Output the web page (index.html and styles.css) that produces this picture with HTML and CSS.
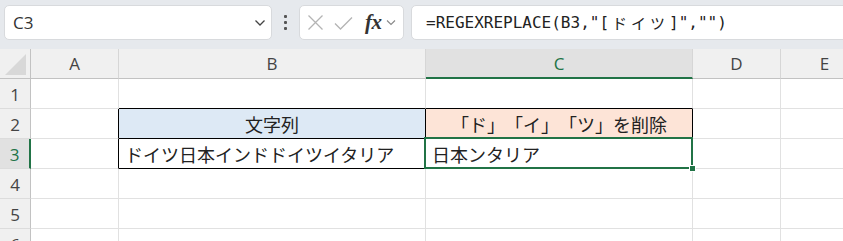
FILE: index.html
```html
<!DOCTYPE html>
<html lang="ja">
<head>
<meta charset="utf-8">
<link rel="stylesheet" href="styles.css">
</head>
<body>
<div class="toolbar">
  <div class="box namebox">
    <span class="name">C3</span>
    <svg class="chev" width="12" height="8" viewBox="0 0 12 8"><path d="M1.5 1.5 L6 6 L10.5 1.5" fill="none" stroke="#444" stroke-width="1.3"/></svg>
  </div>
  <div class="dots"><span></span><span></span><span></span></div>
  <div class="box fxbox">
    <svg class="ic-x" width="17" height="17" viewBox="0 0 17 17"><path d="M1.5 1.5 L15.5 15.5 M15.5 1.5 L1.5 15.5" stroke="#b4b4b4" stroke-width="1.3" fill="none"/></svg>
    <svg class="ic-ok" width="19" height="16" viewBox="0 0 19 16"><path d="M1 8.5 L6.5 14 L18 2.5" stroke="#b4b4b4" stroke-width="1.3" fill="none"/></svg>
    <span class="fx">fx</span>
    <svg width="10" height="7" viewBox="0 0 10 7"><path d="M1 1.5 L5 5.5 L9 1.5" fill="none" stroke="#888" stroke-width="1.1"/></svg>
  </div>
  <div class="box formula">=REGEXREPLACE(B3,"[<span class="kana">ドイツ</span>]","")</div>
</div>
<div class="sheet">
  <div class="hd corner"><span class="tri"></span></div>
  <div class="hd col">A</div>
  <div class="hd col">B</div>
  <div class="hd col sel">C</div>
  <div class="hd col">D</div>
  <div class="hd col">E</div>

  <div class="hd row">1</div>
  <div class="c"></div>
  <div class="c bb"></div>
  <div class="c bb"></div>
  <div class="c"></div>
  <div class="c"></div>

  <div class="hd row">2</div>
  <div class="c br"></div>
  <div class="c box2 blue center">文字列</div>
  <div class="c box2 orange center">「ド」「イ」「ツ」を削除</div>
  <div class="c"></div>
  <div class="c"></div>

  <div class="hd row selrow">3</div>
  <div class="c br"></div>
  <div class="c box2">ドイツ日本インドドイツイタリア</div>
  <div class="c box2 active">日本ンタリア<span class="handle"></span></div>
  <div class="c"></div>
  <div class="c"></div>

  <div class="hd row">4</div>
  <div class="c"></div><div class="c"></div><div class="c"></div><div class="c"></div><div class="c"></div>

  <div class="hd row">5</div>
  <div class="c"></div><div class="c"></div><div class="c"></div><div class="c"></div><div class="c"></div>

  <div class="hd row">6</div>
  <div class="c"></div><div class="c"></div><div class="c"></div><div class="c"></div><div class="c"></div>
</div>
</body>
</html>
```
FILE: styles.css
```css
* { box-sizing: border-box; }
html, body { margin: 0; padding: 0; }
body {
  width: 843px;
  height: 241px;
  overflow: hidden;
  background: #fff;
  font-family: "Noto Sans CJK JP", "Noto Sans", sans-serif;
  color: #222;
  text-spacing-trim: space-all;
}
.toolbar {
  height: 49px;
  background: #e6e9ed;
  display: flex;
  align-items: flex-start;
  padding: 5px 0 0 4px;
}
.box {
  height: 35px;
  background: #fff;
  border: 1px solid #d8dadd;
  border-radius: 5px;
  display: flex;
  align-items: center;
}
.namebox {
  width: 268px;
  padding: 0 0 0 8px;
  justify-content: space-between;
}
.name {
  font-family: "Open Sans", "Liberation Sans", sans-serif;
  font-size: 17px;
  color: #333;
}
.chev { margin-right: 5px; }
.dots {
  width: 27px;
  height: 35px;
  display: flex;
  flex-direction: column;
  align-items: center;
  justify-content: center;
  gap: 3px;
}
.dots span {
  width: 3px;
  height: 3px;
  background: #555;
  border-radius: 1px;
}
.fxbox {
  width: 105px;
  padding-left: 7px;
}
.ic-x { margin-right: 10px; }
.ic-ok { margin-right: 12px; }
.fx {
  font-family: "Liberation Serif", serif;
  font-style: italic;
  font-weight: bold;
  font-size: 21px;
  color: #333;
  margin-right: 4px;
  letter-spacing: -0.5px;
}
.formula {
  flex: 1;
  margin-left: 7px;
  margin-right: -20px;
  padding-left: 14px;
  font-family: "DejaVu Sans Mono", monospace;
  font-size: 16px;
  color: #222;
  border-top-right-radius: 0;
  border-bottom-right-radius: 0;
}
.kana {
  font-family: "Noto Sans CJK JP", sans-serif;
  font-size: 15px;
  letter-spacing: 4px;
  padding-left: 3px;
}
.sheet {
  display: grid;
  grid-template-columns: 31px 88px 307px 267px 88px 88px;
  grid-template-rows: repeat(7, 30px);
  width: 869px;
}
.hd {
  background: #f0f0f0;
  font-family: "Open Sans", "Liberation Sans", sans-serif;
  font-size: 17px;
  color: #444;
  display: flex;
  align-items: center;
  justify-content: center;
}
.corner {
  border-right: 1px solid #c2c2c2;
  border-bottom: 1px solid #c2c2c2;
  position: relative;
}
.tri {
  position: absolute;
  right: 4px;
  bottom: 3px;
  width: 0;
  height: 0;
  border-left: 21px solid transparent;
  border-bottom: 21px solid #d8d8d8;
}
.col {
  border-right: 1px solid #d6d6d6;
  border-bottom: 1px solid #c2c2c2;
}
.col.sel {
  background: #e1e1e1;
  color: #217346;
  border-bottom: 2px solid #217346;
}
.row {
  border-right: 1px solid #c2c2c2;
  border-bottom: 1px solid #dcdcdc;
  padding-top: 2px;
}
.row.selrow {
  background: #e1e1e1;
  color: #217346;
  border-right: 2px solid #217346;
}
.c {
  border-right: 1px solid #e1e1e1;
  border-bottom: 1px solid #e1e1e1;
  font-size: 18px;
  display: flex;
  align-items: center;
  padding: 1px 0 0 6px;
  white-space: nowrap;
}
.c.bb { border-bottom-color: #000; }
.c.br { border-right-color: #000; }
.c.box2 {
  border-right-color: #000;
  border-bottom-color: #000;
}
.center { justify-content: center; padding-left: 0; }
.blue { background: #dde9f5; }
.orange { background: #fde4d7; }
.active { position: relative; }
.active::after {
  content: "";
  position: absolute;
  left: -2px;
  top: -2px;
  right: -1px;
  bottom: -1px;
  border: 2px solid #217346;
  pointer-events: none;
}
.handle {
  position: absolute;
  right: -4px;
  bottom: -4px;
  width: 7px;
  height: 7px;
  background: #217346;
  border: 1px solid #fff;
  z-index: 2;
}
```
